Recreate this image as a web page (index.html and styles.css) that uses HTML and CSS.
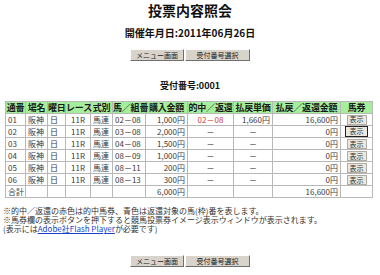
FILE: index.html
```html
<!DOCTYPE html>
<html lang="ja">
<head>
<meta charset="utf-8">
<link rel="stylesheet" href="styles.css">
</head>
<body>
<h1 class="title">投票内容照会</h1>
<p class="date">開催年月日:2011年06月26日</p>
<div class="btns">
  <button class="btn btn-menu">メニュー画面</button><button class="btn btn-sel">受付番号選択</button>
</div>
<p class="receipt">受付番号:0001</p>
<table class="result">
  <colgroup>
    <col class="c1"><col class="c2"><col class="c3"><col class="c4"><col class="c5"><col class="c6"><col class="c7"><col class="c8"><col class="c9"><col class="c10"><col class="c11">
  </colgroup>
  <thead>
    <tr><th>通番</th><th>場名</th><th>曜日</th><th>レース</th><th>式別</th><th>馬／組番</th><th>購入金額</th><th>的中／返還</th><th>払戻単価</th><th>払戻／返還金額</th><th>馬券</th></tr>
  </thead>
  <tbody>
    <tr><td>01</td><td>阪神</td><td>日</td><td class="ctr">11R</td><td>馬連</td><td>02－08</td><td class="num">1,000円</td><td class="ctr hit">02－08</td><td class="num">1,660円</td><td class="num">16,600円</td><td class="ctr"><button class="show">表示</button></td></tr>
    <tr><td>02</td><td>阪神</td><td>日</td><td class="ctr">11R</td><td>馬連</td><td>03－08</td><td class="num">2,000円</td><td class="ctr">－</td><td class="ctr">－</td><td class="num">0円</td><td class="ctr"><button class="show focus">表示</button></td></tr>
    <tr><td>03</td><td>阪神</td><td>日</td><td class="ctr">11R</td><td>馬連</td><td>04－08</td><td class="num">1,500円</td><td class="ctr">－</td><td class="ctr">－</td><td class="num">0円</td><td class="ctr"><button class="show">表示</button></td></tr>
    <tr><td>04</td><td>阪神</td><td>日</td><td class="ctr">11R</td><td>馬連</td><td>08－09</td><td class="num">1,000円</td><td class="ctr">－</td><td class="ctr">－</td><td class="num">0円</td><td class="ctr"><button class="show">表示</button></td></tr>
    <tr><td>05</td><td>阪神</td><td>日</td><td class="ctr">11R</td><td>馬連</td><td>08－11</td><td class="num">200円</td><td class="ctr">－</td><td class="ctr">－</td><td class="num">0円</td><td class="ctr"><button class="show">表示</button></td></tr>
    <tr><td>06</td><td>阪神</td><td>日</td><td class="ctr">11R</td><td>馬連</td><td>08－13</td><td class="num">300円</td><td class="ctr">－</td><td class="ctr">－</td><td class="num">0円</td><td class="ctr"><button class="show">表示</button></td></tr>
    <tr><td>合計</td><td></td><td></td><td></td><td></td><td></td><td class="num">6,000円</td><td></td><td></td><td class="num">16,600円</td><td></td></tr>
  </tbody>
</table>
<div class="notes">
  <p>※的中／返還の赤色は的中馬券、青色は返還対象の馬(枠)番を表します。</p>
  <p>※馬券欄の表示ボタンを押下すると競馬投票券イメージ表示ウィンドウが表示されます。</p>
  <p>(表示には<a href="#" class="link">Adobe社Flash Player</a>が必要です)</p>
</div>
<div class="btns bottom">
  <button class="btn btn-menu">メニュー画面</button><button class="btn btn-sel">受付番号選択</button>
</div>
</body>
</html>
```
FILE: styles.css
```css
html, body {
  margin: 0;
  padding: 0;
  background: #ffffff;
}
body {
  font-family: "Noto Sans CJK JP", "Liberation Sans", sans-serif;
  color: #333333;
  width: 380px;
}
.title {
  margin: 2px 0 0;
  font-size: 14px;
  line-height: 16px;
  font-weight: bold;
  text-align: center;
  color: #111111;
}
.date {
  margin: 9px 0 0;
  font-size: 10px;
  line-height: 12px;
  font-weight: bold;
  text-align: center;
  color: #111111;
}
.btns {
  margin-top: 10px;
  display: flex;
  justify-content: center;
  gap: 1px;
  height: 12px;
}
.btns.bottom {
  margin-top: 22px;
}
.btn {
  box-sizing: border-box;
  height: 12px;
  padding: 0;
  margin: 0;
  font-family: "Noto Sans CJK JP", sans-serif;
  font-size: 7px;
  line-height: 8px;
  color: #222222;
  background: #d8d4cc;
  border: 1px solid;
  border-color: #ffffff #707070 #707070 #ffffff;
}
.btn-menu { width: 54px; }
.btn-sel { width: 65px; }
.receipt {
  margin: 19px 0 0;
  font-size: 9px;
  line-height: 12px;
  font-weight: bold;
  text-align: center;
  color: #111111;
}
.result {
  margin: 9px 0 0 5px;
  border-collapse: collapse;
  table-layout: fixed;
  width: 368px;
  border: 1px solid #9a9a9a;
}
.c1 { width: 20px; }
.c2 { width: 22px; }
.c3 { width: 18px; }
.c4 { width: 25px; }
.c5 { width: 22px; }
.c6 { width: 33px; }
.c7 { width: 42px; }
.c8 { width: 46px; }
.c9 { width: 39px; }
.c10 { width: 68px; }
.c11 { width: 32px; }
.result th {
  background: #a4ee9c;
  color: #1a1a1a;
  font-size: 9px;
  line-height: 11px;
  height: 11px;
  font-weight: bold;
  padding: 0;
  letter-spacing: -0.2px;
  white-space: nowrap;
  text-align: center;
  border: 1px solid #b8b8b8;
}
.result td {
  font-size: 8px;
  line-height: 10px;
  height: 11px;
  padding: 0 2px;
  white-space: nowrap;
  text-align: left;
  color: #3a3a3a;
  border: 1px solid #b8b8b8;
}
.result td.num { text-align: right; }
.result .ctr { text-align: center; }
.result td.hit { color: #d03a3a; }
.show {
  box-sizing: border-box;
  width: 20px;
  height: 10px;
  padding: 0;
  margin: 0;
  font-family: "Noto Sans CJK JP", sans-serif;
  font-size: 7px;
  line-height: 7px;
  color: #333333;
  background: #ebe8e0;
  border: 1px solid #b0aca4;
  vertical-align: middle;
}
.show.focus {
  width: 23px;
  height: 11px;
  border-color: #222222;
}
.notes {
  margin: 8px 0 0 3px;
  font-size: 8px;
  line-height: 9px;
  color: #333333;
}
.notes p {
  margin: 0;
  white-space: nowrap;
}
.link {
  color: #1a3fcc;
  text-decoration: underline;
}
```
